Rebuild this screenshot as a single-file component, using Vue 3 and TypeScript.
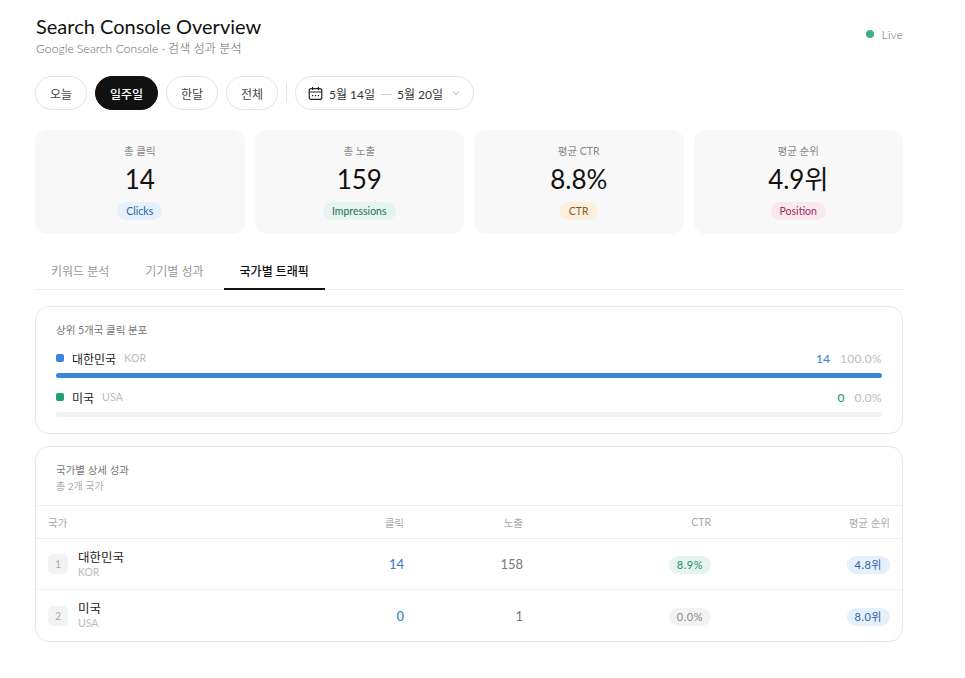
<script setup lang="ts">
interface Stat {
  label: string
  value: string
  tag: string
  tone: string
}

interface Country {
  rank: number
  name: string
  code: string
  clicks: number
  impressions: number
  ctr: string
  position: string
  share: number
  pct: string
  color: string
}

const ranges = ['오늘', '일주일', '한달', '전체']

const stats: Stat[] = [
  { label: '총 클릭', value: '14', tag: 'Clicks', tone: 'blue' },
  { label: '총 노출', value: '159', tag: 'Impressions', tone: 'green' },
  { label: '평균 CTR', value: '8.8%', tag: 'CTR', tone: 'orange' },
  { label: '평균 순위', value: '4.9위', tag: 'Position', tone: 'pink' },
]

const tabs = ['키워드 분석', '기기별 성과', '국가별 트래픽']

const countries: Country[] = [
  { rank: 1, name: '대한민국', code: 'KOR', clicks: 14, impressions: 158, ctr: '8.9%', position: '4.8위', share: 100, pct: '100.0%', color: '#3b86d8' },
  { rank: 2, name: '미국', code: 'USA', clicks: 0, impressions: 1, ctr: '0.0%', position: '8.0위', share: 0, pct: '0.0%', color: '#1f9d74' },
]
</script>

<template>
  <div class="page">
    <header class="head">
      <div>
        <h1 class="title">Search Console Overview</h1>
        <p class="sub">Google Search Console · 검색 성과 분석</p>
      </div>
      <div class="live"><span class="live-dot"></span>Live</div>
    </header>

    <div class="filters">
      <button v-for="r in ranges" :key="r" class="pill" :class="{ active: r === '일주일' }">{{ r }}</button>
      <span class="divider"></span>
      <button class="pill date">
        <svg width="15" height="15" viewBox="0 0 15 15" fill="none" stroke="#222" stroke-width="1.2">
          <rect x="1.2" y="2.6" width="12.6" height="10.8" rx="2" />
          <path d="M1.2 6h12.6M4.6 1v3M10.4 1v3" />
          <path d="M4 9.6h1.2M6.9 9.6h1.2M9.8 9.6H11" stroke-width="1.4" />
        </svg>
        <span>5월 14일</span>
        <span class="dash">—</span>
        <span>5월 20일</span>
        <svg class="chev" width="8" height="8" viewBox="0 0 8 8" fill="none" stroke="#aaa" stroke-width="1">
          <path d="M1.2 2.8 4 5.4l2.8-2.6" />
        </svg>
      </button>
    </div>

    <section class="stats">
      <div v-for="s in stats" :key="s.label" class="stat">
        <div class="stat-label">{{ s.label }}</div>
        <div class="stat-value">{{ s.value }}</div>
        <span class="tag" :class="s.tone">{{ s.tag }}</span>
      </div>
    </section>

    <nav class="tabs">
      <div v-for="t in tabs" :key="t" class="tab" :class="{ current: t === '국가별 트래픽' }">{{ t }}</div>
    </nav>

    <section class="panel dist">
      <div class="panel-title">상위 5개국 클릭 분포</div>
      <div v-for="c in countries" :key="c.code" class="dist-row">
        <div class="dist-line">
          <span class="dot" :style="{ background: c.color }"></span>
          <span class="dist-name">{{ c.name }}</span>
          <span class="code">{{ c.code }}</span>
          <span class="dist-count" :style="{ color: c.color }">{{ c.clicks }}</span>
          <span class="dist-pct">{{ c.pct }}</span>
        </div>
        <div class="track">
          <div class="fill" :style="{ width: c.share + '%', background: c.color }"></div>
        </div>
      </div>
    </section>

    <section class="panel detail">
      <div class="detail-head">
        <div class="panel-title">국가별 상세 성과</div>
        <div class="detail-sub">총 2개 국가</div>
      </div>
      <table class="table">
        <thead>
          <tr>
            <th class="left">국가</th>
            <th class="c-clicks">클릭</th>
            <th class="c-imp">노출</th>
            <th class="c-ctr">CTR</th>
            <th class="c-pos">평균 순위</th>
          </tr>
        </thead>
        <tbody>
          <tr v-for="c in countries" :key="c.code">
            <td class="left">
              <div class="who">
                <span class="rank">{{ c.rank }}</span>
                <div>
                  <div class="who-name">{{ c.name }}</div>
                  <div class="who-code">{{ c.code }}</div>
                </div>
              </div>
            </td>
            <td class="num clicks">{{ c.clicks }}</td>
            <td class="num imp">{{ c.impressions }}</td>
            <td><span class="chip" :class="c.clicks > 0 ? 'green' : 'grey'">{{ c.ctr }}</span></td>
            <td><span class="chip blue">{{ c.position }}</span></td>
          </tr>
        </tbody>
      </table>
    </section>
  </div>
</template>

<style>
html,
body {
  background: #fff;
}
</style>

<style scoped>
.page {
  box-sizing: border-box;
  width: 965px;
  min-height: 678px;
  padding: 14px 62px 0 35px;
  font-family: Lato, 'Noto Sans CJK KR', sans-serif;
  color: #111;
}

.head {
  display: flex;
  justify-content: space-between;
  align-items: center;
  height: 46px;
}

.title {
  margin: -4px 0 0 1px;
  font-size: 20px;
  line-height: 26px;
  font-weight: 400;
  letter-spacing: 0;
}

.sub {
  margin: 1px 0 0 1px;
  font-size: 12px;
  line-height: 18px;
  font-weight: 300;
  color: #666;
  letter-spacing: 0.1px;
}

.live {
  display: flex;
  align-items: center;
  gap: 8px;
  margin-top: -6px;
  margin-left: -1px;
  font-size: 11.5px;
  font-weight: 300;
  color: #666;
  letter-spacing: 0.3px;
}

.live-dot {
  width: 8px;
  height: 8px;
  border-radius: 50%;
  background: #3fae8a;
}

.filters {
  display: flex;
  align-items: center;
  gap: 8px;
  margin-top: 16px;
}

.pill {
  box-sizing: border-box;
  height: 34px;
  width: 52px;
  padding: 0;
  border: 1px solid #e4e4e4;
  border-radius: 17px;
  background: #fff;
  font-family: inherit;
  font-size: 12px;
  color: #444;
  white-space: nowrap;
}

.pill.active {
  width: 63px;
  border-color: #111;
  background: #111;
  color: #fff;
  font-weight: 500;
}

.divider {
  width: 1px;
  height: 20px;
  background: #e4e4e4;
}

.pill.date {
  display: flex;
  align-items: center;
  gap: 6px;
  width: 179px;
  padding: 0 13px 0 12px;
  color: #333;
}

.dash {
  margin: 0 -1px;
  font-size: 15px;
  color: #ccc;
}

.chev {
  margin-left: 3px;
}

.stats {
  display: grid;
  grid-template-columns: repeat(4, 1fr);
  gap: 10px;
  margin-top: 20px;
}

.stat {
  height: 104px;
  box-sizing: border-box;
  padding-top: 13px;
  border-radius: 12px;
  background: #f8f8f8;
  text-align: center;
}

.stat-label {
  font-size: 10.5px;
  line-height: 16px;
  color: #888;
}

.stat-value {
  margin-top: 5px;
  font-size: 26px;
  line-height: 30px;
  color: #111;
}

.tag {
  display: inline-block;
  margin-top: 8px;
  padding: 0 9px;
  height: 18px;
  line-height: 18px;
  border-radius: 9px;
  font-size: 10.5px;
}

.tag.blue {
  background: #e6f0fb;
  color: #2a65a8;
}

.tag.green {
  background: #e5f4ee;
  color: #1f7357;
}

.tag.orange {
  background: #fcefdd;
  color: #8a5a1c;
}

.tag.pink {
  background: #fbe7ef;
  color: #96305a;
}

.tabs {
  display: flex;
  margin-top: 19px;
  border-bottom: 1px solid #ececec;
}

.tab {
  height: 36px;
  padding: 0 16px;
  margin-right: 4px;
  font-size: 12px;
  line-height: 38px;
  color: #999;
}

.tab.current {
  margin-bottom: -1px;
  height: 35px;
  border-bottom: 2px solid #111;
  color: #111;
  font-weight: 500;
}

.panel {
  box-sizing: border-box;
  border: 1px solid #e8e8e8;
  border-radius: 14px;
  background: #fff;
}

.dist {
  height: 128px;
  margin-top: 16px;
  padding: 15px 20px 0;
}

.panel-title {
  font-size: 10.5px;
  line-height: 16px;
  color: #777;
}

.dist-row {
  margin-top: 9px;
}

.dist-row + .dist-row {
  margin-top: 8px;
}

.dist-line {
  display: flex;
  align-items: center;
  height: 22px;
  font-size: 12px;
}

.dot {
  width: 8px;
  height: 8px;
  border-radius: 2px;
  margin-right: 8px;
}

.dist-name {
  color: #222;
}

.code {
  margin-left: 8px;
  font-size: 10.5px;
  color: #bbb;
  letter-spacing: 0.2px;
}

.dist-count {
  margin-left: auto;
  font-weight: 500;
}

.dist-pct {
  margin-left: 10px;
  font-size: 12px;
  color: #bbb;
  letter-spacing: 0.3px;
}

.track {
  height: 5px;
  margin-top: 4px;
  border-radius: 3px;
  background: #f2f2f2;
}

.fill {
  height: 100%;
  border-radius: 3px;
}

.detail {
  margin-top: 12px;
  overflow: hidden;
}

.detail-head {
  height: 59px;
  box-sizing: border-box;
  padding: 15px 20px 0;
  border-bottom: 1px solid #eee;
}

.detail-sub {
  font-size: 10px;
  line-height: 16px;
  color: #aaa;
}

.table {
  width: 100%;
  border-collapse: collapse;
  table-layout: fixed;
}

th {
  height: 32px;
  padding: 0 12px;
  font-size: 10.5px;
  font-weight: 400;
  color: #aaa;
  text-align: right;
  border-bottom: 1px solid #eee;
}

td {
  height: 50px;
  padding: 0 12px;
  text-align: right;
  border-bottom: 1px solid #f3f3f3;
}

tbody tr:last-child td {
  height: 51px;
  border-bottom: 0;
}

.left {
  text-align: left;
  width: 263px;
}

.c-clicks {
  width: 69px;
}

.c-imp {
  width: 95px;
}

.c-ctr {
  width: 164px;
}

.who {
  display: flex;
  align-items: center;
  gap: 10px;
}

.rank {
  width: 20px;
  height: 20px;
  border-radius: 5px;
  background: #f3f3f3;
  font-size: 10.5px;
  line-height: 20px;
  text-align: center;
  color: #aaa;
}

.who-name {
  font-size: 12.5px;
  line-height: 16px;
  color: #222;
}

.who-code {
  font-size: 10.5px;
  line-height: 13px;
  color: #bbb;
}

.num {
  font-size: 13px;
}

.clicks {
  color: #3b7fc9;
  font-weight: 500;
}

.imp {
  color: #777;
}

.chip {
  display: inline-block;
  vertical-align: middle;
  height: 18px;
  padding: 0 8px;
  border-radius: 9px;
  font-size: 11px;
  line-height: 18px;
  letter-spacing: 0.5px;
}

.chip.green {
  background: #e5f4ee;
  color: #1f8a66;
}

.chip.grey {
  background: #f3f3f3;
  color: #888;
}

.chip.blue {
  background: #e6f0fb;
  color: #2a65a8;
}
</style>
